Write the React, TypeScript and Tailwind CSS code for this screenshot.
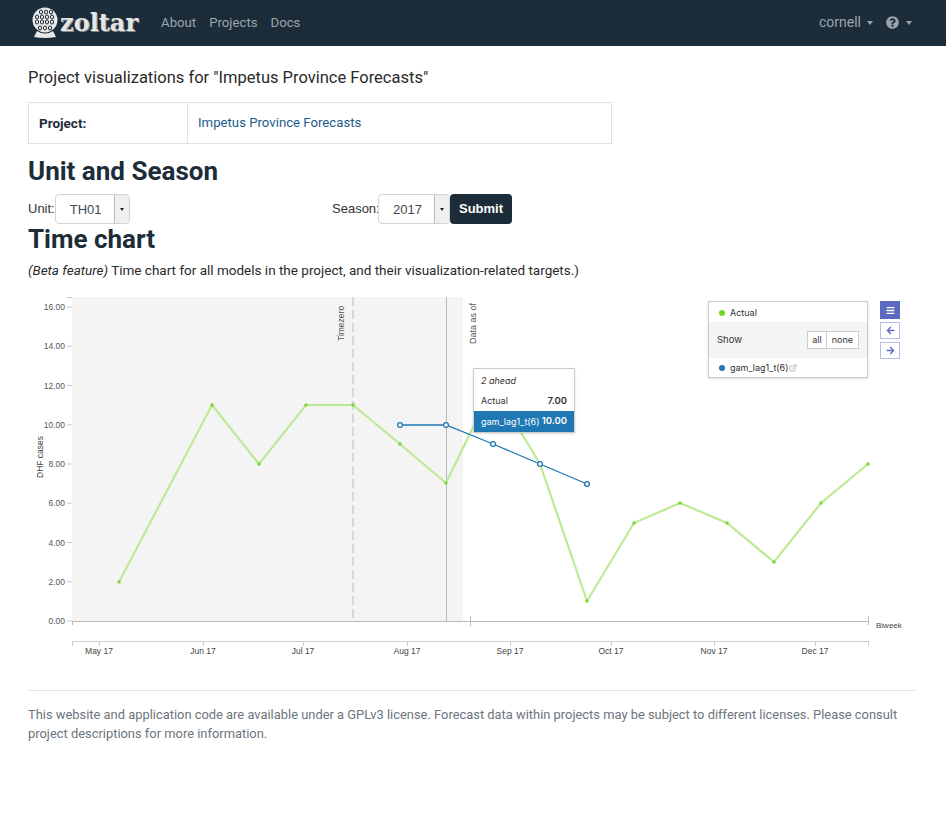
import React from 'react';
import { ExternalLink } from 'lucide-react';
import { FaArrowLeft, FaArrowRight, FaBars, FaQuestionCircle } from 'react-icons/fa';

const actual: [number, number][] = [
  [119, 582], [212, 405], [259, 464], [306, 405], [353, 405], [400, 444], [446, 483],
  [493, 386], [540, 464], [587, 601], [634, 523], [680, 503], [727, 523], [774, 562], [821, 503], [868, 464],
];
const forecast: [number, number][] = [[400, 425], [446, 425], [493, 444], [540, 464], [587, 484]];
const yTicks = [0, 2, 4, 6, 8, 10, 12, 14, 16];
const months: [string, number][] = [
  ['May 17', 99], ['Jun 17', 203], ['Jul 17', 303], ['Aug 17', 407],
  ['Sep 17', 510], ['Oct 17', 611], ['Nov 17', 714], ['Dec 17', 815],
];
const pts = (p: [number, number][]) => p.map(([x, y]) => `${x},${y}`).join(' ');

const Logo = () => (
  <svg width="28" height="32" viewBox="0 0 28 32" className="shrink-0">
    <circle cx="14" cy="13" r="12.5" fill="#e8e8e8" />
    {[[9, 4], [14, 4], [19, 4], [5, 9], [10, 9], [15, 9], [20, 9], [5, 14], [10, 14], [15, 14], [20, 14], [8, 20], [13, 20], [18, 20]].map(([x, y], i) => (
      <ellipse key={i} cx={x + 1} cy={y + 1} rx="1.6" ry="2" fill="none" stroke="#1c2d39" strokeWidth="1" />
    ))}
    <path d="M6 24 Q14 29 22 24 L25 30 Q14 32 3 30 Z" fill="#e8e8e8" />
  </svg>
);

const FakeSelect = ({ value, width }: { value: string; width: string }) => (
  <div className={`flex h-[30px] ${width} items-stretch overflow-hidden rounded-[4px] border border-[#ced4da] bg-white text-[13px] text-[#3f4a52]`}>
    <span className="flex flex-1 items-center pl-[14px] pt-[1px]">{value}</span>
    <span className="flex w-[15px] items-center justify-center border-l border-[#bbb] bg-[#efefef]">
      <span className="h-0 w-0 border-x-[2.5px] border-t-[3px] border-x-transparent border-t-[#222]" />
    </span>
  </div>
);

const Chart = () => (
  <svg width="946" height="370" viewBox="0 290 946 370" className="block" fontFamily="'Liberation Sans', sans-serif">
    <rect x="72" y="297" width="391" height="324" fill="#f4f4f4" />
    {yTicks.map((v) => {
      const y = 621 - v * 19.62;
      return (
        <g key={v}>
          <line x1="67" x2="72" y1={y} y2={y} stroke="#ccc" />
          <text x="65" y={y + 3} textAnchor="end" fontSize="8.5" fill="#555">{v.toFixed(2)}</text>
        </g>
      );
    })}
    <line x1="67" x2="72" y1="297.5" y2="297.5" stroke="#ccc" />
    <text transform="translate(43 478) rotate(-90)" fontSize="8.5" fill="#444">DHF cases</text>

    <line x1="353" x2="353" y1="297" y2="621" stroke="#d8d8d8" strokeWidth="2" strokeDasharray="9 4" />
    <text transform="translate(344 341) rotate(-90)" fontSize="8.5" fill="#555">Timezero</text>
    <line x1="446.5" x2="446.5" y1="297" y2="621" stroke="#bbb" />
    <text transform="translate(476 344) rotate(-90)" fontSize="9" fill="#555">Data as of</text>

    <line x1="72" x2="868" y1="621.5" y2="621.5" stroke="#bbb" />
    <line x1="72.5" x2="72.5" y1="621" y2="625" stroke="#bbb" />
    <line x1="470.5" x2="470.5" y1="616" y2="626" stroke="#bbb" />
    <line x1="868.5" x2="868.5" y1="616" y2="625" stroke="#bbb" />
    <text x="876" y="628" fontSize="8" fill="#444">Biweek</text>

    <line x1="72" x2="868" y1="641.5" y2="641.5" stroke="#ccc" />
    <line x1="72.5" x2="72.5" y1="641" y2="646" stroke="#ccc" />
    <line x1="868.5" x2="868.5" y1="641" y2="646" stroke="#ccc" />
    {months.map(([label, x]) => (
      <g key={label}>
        <line x1={x + 0.5} x2={x + 0.5} y1="641" y2="646" stroke="#ccc" />
        <text x={x} y="654" textAnchor="middle" fontSize="8.5" fill="#444">{label}</text>
      </g>
    ))}

    <polyline points={pts(actual)} fill="none" stroke="#bdea95" strokeWidth="2.2" />
    {actual.map(([x, y]) => <circle key={x} cx={x} cy={y} r="1.8" fill="#7fd63f" />)}
    <polyline points={pts(forecast)} fill="none" stroke="#1f78b4" strokeWidth="1.3" />
    {forecast.map(([x, y]) => <circle key={x} cx={x} cy={y} r="2.4" fill="#fff" stroke="#1f78b4" strokeWidth="1.3" />)}
  </svg>
);

export default function App() {
  return (
    <div className="min-h-[821px] bg-white font-['Roboto',sans-serif] text-[#1c2d39]">
      <nav className="flex h-[46px] items-center bg-[#1c2d39] pb-[1px] pl-[31px] pr-[34px] text-[13.2px] text-[#9aa5ad]">
        <Logo />
        <span className="ml-[1px] font-['DejaVu_Serif',serif] text-[24px] font-bold leading-none text-[#e6e6e6] [text-shadow:1px_1px_0_#888]">zoltar</span>
        <a className="ml-[23px]">About</a>
        <a className="ml-[13px]">Projects</a>
        <a className="ml-[13px]">Docs</a>
        <span className="ml-auto text-[14px]">cornell</span>
        <span className="ml-[6px] h-0 w-0 border-x-[3.5px] border-t-[4px] border-x-transparent border-t-[#9aa5ad]" />
        <FaQuestionCircle className="ml-[13px] h-[13px] w-[13px]" />
        <span className="ml-[7px] h-0 w-0 border-x-[3.5px] border-t-[4px] border-x-transparent border-t-[#9aa5ad]" />
      </nav>

      <main className="relative">
        <div className="px-[28px]">
          <p className="mt-[20px] text-[16.5px] leading-[24px] text-[#2a2a2a]">Project visualizations for "Impetus Province Forecasts"</p>
          <div className="mt-[12px] flex h-[42px] w-[584px] border border-[#dee2e6] text-[13.5px]">
            <div className="flex w-[159px] items-center border-r border-[#dee2e6] pl-[10px] font-bold">Project:</div>
            <div className="flex flex-1 items-center pl-[10px] text-[13.2px] text-[#1d5c8a]">Impetus Province Forecasts</div>
          </div>
          <h2 className="mt-[10px] text-[26px] font-bold leading-[34px]">Unit and Season</h2>
          <div className="mt-[6px] flex h-[30px] items-center text-[13px] text-[#333] font-['Liberation_Sans',sans-serif]">
            <div className="flex w-[304px] items-center">
              <span>Unit:</span>
              <FakeSelect value="TH01" width="w-[75px]" />
            </div>
            <span className="w-[46px]">Season:</span>
            <FakeSelect value="2017" width="w-[72px]" />
            <button className="h-[30px] w-[62px] rounded-[4px] bg-[#1c2d39] text-[13px] font-bold text-white">Submit</button>
          </div>
          <h2 className="mt-[-1px] text-[26px] font-bold leading-[32px]">Time chart</h2>
          <p className="mt-[5px] text-[13.5px] leading-[21px] text-[#2a2a2a]"><em>(Beta feature)</em> Time chart for all models in the project, and their visualization-related targets.)</p>
        </div>

        <div className="relative mt-[9px] h-[370px] w-[946px]">
          <Chart />
          <div className="absolute left-[473px] top-[78px] w-[102px] border border-[#ccc] bg-white text-[9px] shadow-sm font-['Inter',sans-serif] text-[#333]">
            <div className="px-[7px] pt-[5px] leading-[14px] italic">2 ahead</div>
            <div className="flex justify-between px-[7px] pt-[6px] pb-[3px] leading-[14px]"><span>Actual</span><span className="text-[9.5px] font-semibold">7.00</span></div>
            <div className="flex h-[21px] items-center justify-between bg-[#1f78b4] px-[7px] text-white"><span>gam_lag1_t(6)</span><span className="text-[9.5px] font-semibold">10.00</span></div>
          </div>
          <div className="absolute left-[708px] top-[11px] w-[160px] border border-[#ccc] bg-white text-[9px] shadow-sm font-['Inter',sans-serif] text-[#333]">
            <div className="flex h-[20px] items-center pl-[10px] pt-[1px]"><span className="mr-[5px] h-[6px] w-[6px] rounded-full bg-[#6fd820]" />Actual</div>
            <div className="flex h-[36px] items-center justify-between bg-[#f4f4f4] pl-[8px] pr-[8px]">
              <span className="text-[9.5px]">Show</span>
              <span className="flex">
                <span className="border border-[#ccc] bg-white px-[4px] py-[1px]">all</span>
                <span className="border border-l-0 border-[#ccc] bg-white px-[5px] py-[1px]">none</span>
              </span>
            </div>
            <div className="flex h-[19px] items-center pl-[10px]">
              <span className="mr-[5px] h-[6px] w-[6px] rounded-full bg-[#1f78b4]" />gam_lag1_t(6)
              <ExternalLink className="ml-[1px] h-[8px] w-[8px] text-[#999]" />
            </div>
          </div>
          <div className="absolute left-[880px] top-[11px] flex w-[20px] flex-col gap-[3px]">
            <span className="flex h-[18px] items-center justify-center bg-[#5c6bc0] text-white"><FaBars className="h-[9px] w-[9px]" /></span>
            <span className="flex h-[17px] items-center justify-center border border-[#b4bce8] text-[#5c6bc0]"><FaArrowLeft className="h-[9px] w-[9px]" /></span>
            <span className="flex h-[17px] items-center justify-center border border-[#b4bce8] text-[#5c6bc0]"><FaArrowRight className="h-[9px] w-[9px]" /></span>
          </div>
        </div>

        <footer className="ml-[28px] mr-[30px] mt-[30px] border-t border-[#e3e3e3] pt-[14px] text-[12.9px] leading-[19px] text-[#6c757d]">
          This website and application code are available under a GPLv3 license. Forecast data within projects may be subject to different licenses. Please consult project descriptions for more information.
        </footer>
      </main>
    </div>
  );
}
